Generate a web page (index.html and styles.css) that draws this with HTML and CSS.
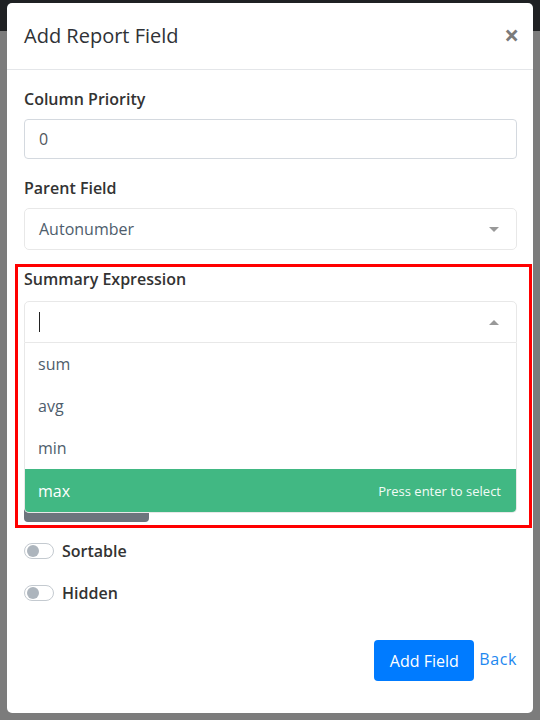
FILE: index.html
```html
<!DOCTYPE html>
<html>
<head>
<meta charset="utf-8">
<link rel="stylesheet" href="styles.css">
</head>
<body>
<div class="modal">
  <div class="modal-header">
    <h5 class="modal-title">Add Report Field</h5>
    <span class="close">&times;</span>
  </div>
  <div class="modal-body">
    <div class="form-group">
      <label class="label">Column Priority</label>
      <div class="input">0</div>
    </div>
    <div class="form-group">
      <label class="label">Parent Field</label>
      <div class="ms">
        <span class="ms-value">Autonumber</span>
        <span class="caret down"></span>
      </div>
    </div>
    <div class="highlight">
      <label class="label label-summary">Summary Expression</label>
      <div class="ms-wrap">
        <div class="ms open">
          <span class="cursor"></span>
          <span class="caret up"></span>
        </div>
        <ul class="ms-list">
          <li class="opt">sum</li>
          <li class="opt">avg</li>
          <li class="opt">min</li>
          <li class="opt active"><span>max</span><span class="hint">Press enter to select</span></li>
        </ul>
      </div>
      <div class="gray-btn"></div>
    </div>
    <div class="switch-row">
      <span class="switch"><span class="knob"></span></span>
      <span class="switch-label">Sortable</span>
    </div>
    <div class="switch-row">
      <span class="switch"><span class="knob"></span></span>
      <span class="switch-label">Hidden</span>
    </div>
    <div class="footer">
      <button class="btn-primary">Add Field</button>
      <a class="back">Back</a>
    </div>
  </div>
</div>
</body>
</html>
```
FILE: styles.css
```css
* { box-sizing: border-box; }
html, body { margin: 0; padding: 0; }
body {
  width: 540px;
  height: 720px;
  overflow: hidden;
  font-family: "Open Sans", "Liberation Sans", sans-serif;
  background: linear-gradient(#1f2123 0, #1f2123 31px, #7c7c7c 31px, #7c7c7c 100%);
  padding: 3px 7px 0 7px;
}
.modal {
  background: #fff;
  border-radius: 5px;
  width: 526px;
  height: 710px;
  overflow: hidden;
}
.modal-header {
  display: flex;
  align-items: center;
  justify-content: space-between;
  height: 67px;
  padding: 0 14px 0 17px;
  border-bottom: 1px solid #e4e6e9;
}
.modal-title {
  margin: 0;
  font-size: 20px;
  font-weight: 400;
  color: #2f3236;
  line-height: 30px;
}
.close {
  font-size: 26px;
  font-weight: 700;
  color: #7b7b7b;
  line-height: 1;
  margin-top: -2px;
}
.modal-body {
  padding: 17px 16px 0 17px;
}
.form-group { margin-bottom: 17px; }
.label {
  display: block;
  font-size: 16px;
  font-weight: 600;
  line-height: 24px;
  color: #333;
  margin-bottom: 8px;
}
.label-summary { margin-bottom: 10px; }
.input {
  height: 40px;
  border: 1px solid #d4d9df;
  border-radius: 4px;
  padding: 0 14px;
  font-size: 16px;
  line-height: 38px;
  color: #51575d;
}
.ms {
  position: relative;
  height: 42px;
  border: 1px solid #e8e8e8;
  border-radius: 5px;
  padding: 0 14px;
  font-size: 16px;
  line-height: 40px;
  color: #4e5d6c;
  display: flex;
  align-items: center;
}
.ms.open {
  border-bottom-left-radius: 0;
  border-bottom-right-radius: 0;
}
.cursor {
  display: inline-block;
  width: 1px;
  height: 20px;
  background: #222;
}
.caret {
  margin-left: auto;
  width: 0;
  height: 0;
  border-left: 5px solid transparent;
  border-right: 5px solid transparent;
  margin-right: 3px;
}
.caret.down { border-top: 5px solid #999; }
.caret.up { border-bottom: 5px solid #999; }
.highlight {
  border: 3px solid #ff0000;
  margin: -3px -15px 0 -9px;
  padding: 0 12px 3px 6px;
}
.ms-wrap { position: relative; }
.ms-list {
  position: absolute;
  left: 0;
  right: 0;
  top: 42px;
  margin: 0;
  padding: 0;
  list-style: none;
  background: #fff;
  border: 1px solid #e8e8e8;
  border-top: none;
  border-bottom-left-radius: 5px;
  border-bottom-right-radius: 5px;
  overflow: hidden;
  z-index: 2;
}
.opt {
  height: 42px;
  display: flex;
  align-items: center;
  justify-content: space-between;
  padding: 0 12px 0 13px;
  font-size: 16px;
  color: #4e5d6c;
}
.opt.active {
  background: #41b883;
  color: #fff;
  height: 43px;
}
.hint {
  font-size: 13px;
  color: #f2fbf6;
  margin-right: 3px;
}
.gray-btn {
  width: 125px;
  height: 38px;
  margin-top: 141px;
  background: #6c757d;
  border-radius: 4px;
}
.switch-row {
  display: flex;
  align-items: center;
  height: 24px;
  margin-top: 11px;
}
.switch-row + .switch-row { margin-top: 18px; }
.switch {
  width: 30px;
  height: 16px;
  border: 1px solid #c4cad0;
  border-radius: 8px;
  background: #fff;
  display: flex;
  align-items: center;
  padding-left: 2px;
  margin-right: 8px;
}
.knob {
  width: 12px;
  height: 12px;
  border-radius: 50%;
  background: #adb5bd;
}
.switch-label {
  font-size: 16px;
  font-weight: 600;
  color: #333;
}
.footer {
  display: flex;
  justify-content: flex-end;
  align-items: center;
  margin-top: 35px;
}
.btn-primary {
  font-family: inherit;
  height: 41px;
  width: 100px;
  background: #007bff;
  color: #fff;
  border: none;
  border-radius: 4px;
  font-size: 16px;
  padding: 0;
}
.back {
  color: #1e88f0;
  font-size: 16px;
  letter-spacing: 0.6px;
  margin-left: 5px;
  margin-top: -4px;
}
```
